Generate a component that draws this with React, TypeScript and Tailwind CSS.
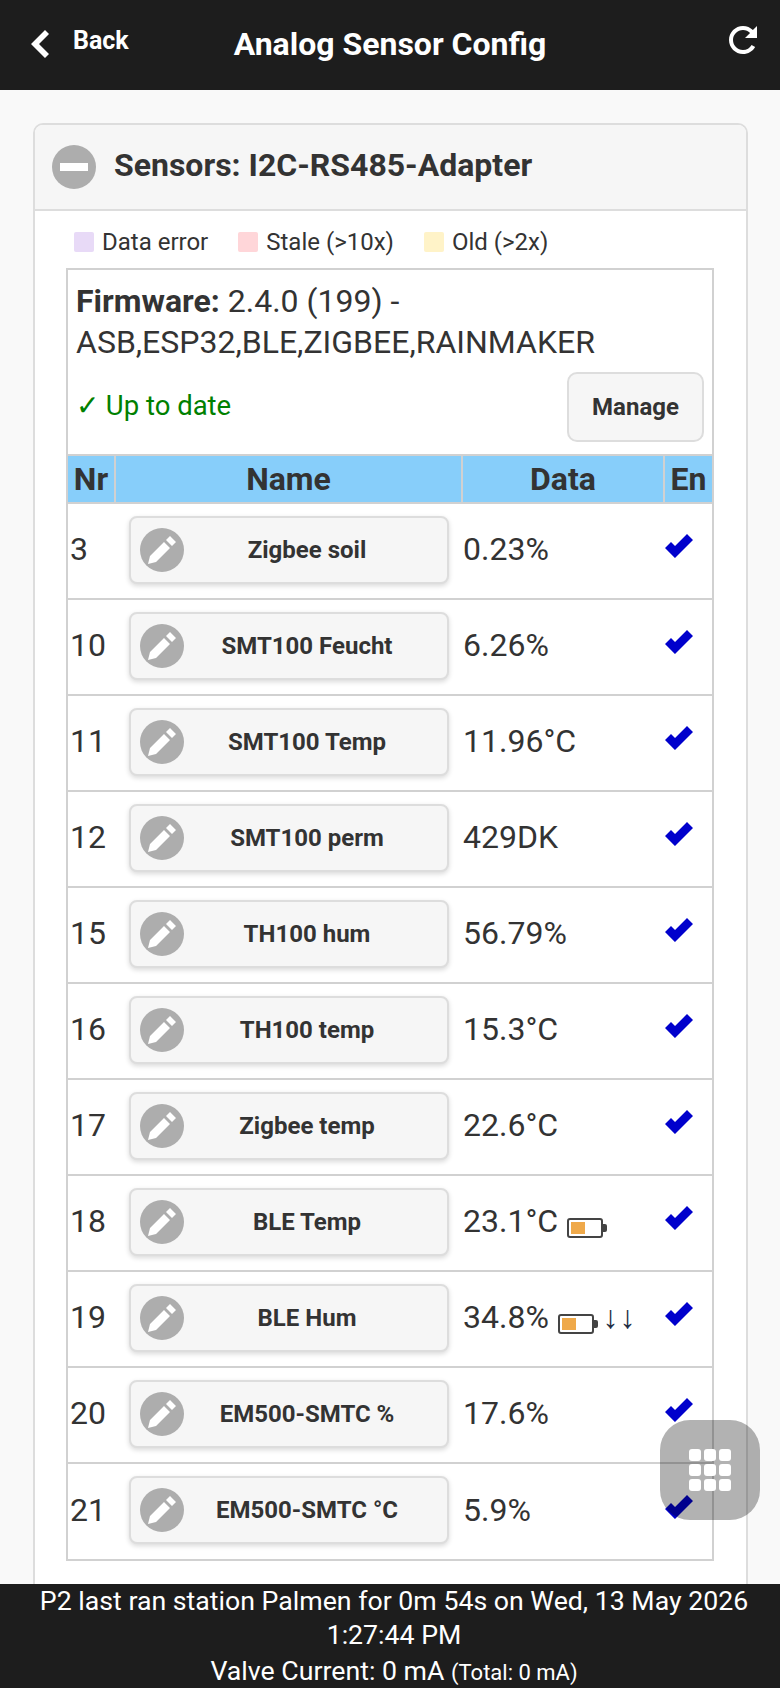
// App.tsx
const sensors = [
  { nr: 3, name: 'Zigbee soil', data: '0.23%' },
  { nr: 10, name: 'SMT100 Feucht', data: '6.26%' },
  { nr: 11, name: 'SMT100 Temp', data: '11.96°C' },
  { nr: 12, name: 'SMT100 perm', data: '429DK' },
  { nr: 15, name: 'TH100 hum', data: '56.79%' },
  { nr: 16, name: 'TH100 temp', data: '15.3°C' },
  { nr: 17, name: 'Zigbee temp', data: '22.6°C' },
  { nr: 18, name: 'BLE Temp', data: '23.1°C', battery: true },
  { nr: 19, name: 'BLE Hum', data: '34.8%', battery: true, arrows: true },
  { nr: 20, name: 'EM500-SMTC %', data: '17.6%' },
  { nr: 21, name: 'EM500-SMTC °C', data: '5.9%' },
];

const legend = [
  { label: 'Data error', color: 'bg-[#e8daf7]' },
  { label: 'Stale (>10x)', color: 'bg-[#ffd6d9]' },
  { label: 'Old (>2x)', color: 'bg-[#fff3c8]' },
];

const Battery = () => (
  <span className="ml-[9px] inline-flex items-center align-[-2px]">
    <span className="flex h-[20px] w-[36px] items-center rounded-[3px] border-2 border-[#444] pl-[2px]">
      <span className="h-[12px] w-[14px] bg-[#efa94a]" />
    </span>
    <span className="h-[8px] w-[4px] rounded-r-[2px] bg-[#444]" />
  </span>
);

const CheckIcon = () => (
  <svg viewBox="0 0 14 14" className="h-[28px] w-[28px] fill-[#0000cc]">
    <polygon points="14,4 11,1 5.003,6.997 3,5 0,8 4.966,13 4.983,12.982 5,13" />
  </svg>
);

const EditIcon = () => (
  <span className="flex h-[44px] w-[44px] items-center justify-center rounded-full bg-[#adadad]">
    <svg viewBox="0 0 14 14" className="h-[28px] w-[28px] fill-white">
      <path d="M1,10l-1,4l4-1l7-7L8,3L1,10z M11,0L9,2l3,3l2-2L11,0z" />
    </svg>
  </span>
);

export default function App() {
  return (
    <div className="relative flex h-screen flex-col overflow-hidden bg-[#f9f9f9] font-['Roboto',sans-serif] text-[#333]">
      {/* Header */}
      <header className="relative flex h-[90px] shrink-0 items-center justify-center bg-[#1d1d1d] font-bold text-white">
        <div className="absolute left-[27px] top-[28px] flex items-center">
          <svg viewBox="0 0 14 14" className="h-[28px] w-[28px] fill-white">
            <polygon points="11,12 6,7 11,2 9,0 2,7 9,14" />
          </svg>
          <span className="ml-[18px] -mt-[6px] text-[25px]">Back</span>
        </div>
        <h1 className="-mt-[2px] text-[32px]">Analog Sensor Config</h1>
        <svg viewBox="0 0 14 14" className="absolute left-[729px] top-[26px] h-[28px] w-[28px] fill-white">
          <path d="M7,12c-2.762,0-5-2.238-5-5s2.238-5,5-5c1.383,0,2.633,0.561,3.538,1.466L8,6h6V0l-2.048,2.048C10.687,0.783,8.936,0,7,0C3.134,0,0,3.134,0,7s3.134,7,7,7c2.6,0,4.87-1.42,6.08-3.53L11.3,9.45C10.44,10.98,8.84,12,7,12z" />
        </svg>
      </header>

      {/* Content */}
      <main className="min-h-0 flex-1 overflow-hidden pl-[33px] pr-[32px] pt-[33px]">
        <section className="rounded-[10px] border-2 border-[#ddd] bg-white">
          <div className="flex h-[86px] items-center gap-[18px] rounded-t-[8px] border-b-2 border-[#ddd] bg-[#f6f6f6] pl-[17px]">
            <span className="flex h-[44px] w-[44px] items-center justify-center rounded-full bg-[#adadad]">
              <svg viewBox="0 0 14 14" className="h-[28px] w-[28px] fill-white">
                <rect y="5" width="14" height="4" />
              </svg>
            </span>
            <h2 className="-mt-[4px] text-[32px] font-bold">Sensors: I2C-RS485-Adapter</h2>
          </div>

          <div className="pb-[60px] pl-[31px] pr-[32px]">
            <div className="flex h-[57px] items-center pl-[8px] pt-[5px] text-[24px]">
              {legend.map(item => (
                <div key={item.label} className="mr-[30px] flex items-center">
                  <span className={`mr-[8px] h-[20px] w-[20px] rounded-[2px] ${item.color}`} />
                  {item.label}
                </div>
              ))}
            </div>

            <div className="border-2 border-[#d1d1d1]">
              {/* Firmware */}
              <div className="relative h-[184px] pl-[8px] pt-[11px] text-[32px] leading-[41px]">
                <div><b>Firmware:</b> 2.4.0 (199) -</div>
                <div>ASB,ESP32,BLE,ZIGBEE,RAINMAKER</div>
                <div className="mt-[22px] text-[27.5px] text-[#008000]">✓ Up to date</div>
                <button className="absolute right-[8px] top-[102px] h-[70px] w-[137px] rounded-[10px] border-2 border-[#ddd] bg-[#f6f6f6] text-[24px] font-bold leading-normal">
                  Manage
                </button>
              </div>

              <table className="w-full table-fixed border-collapse">
                <colgroup>
                  <col className="w-[47px]" />
                  <col className="w-[347px]" />
                  <col className="w-[202px]" />
                  <col />
                </colgroup>
                <thead>
                  <tr className="h-[48px] border-y-2 border-[#d1d1d1] bg-[#87cefa] text-[32px] font-bold leading-[40px]">
                    <th className="border-r-2 border-[#d1d1d1]">Nr</th>
                    <th className="border-r-2 border-[#d1d1d1]">Name</th>
                    <th className="border-r-2 border-[#d1d1d1]">Data</th>
                    <th>En</th>
                  </tr>
                </thead>
                <tbody>
                  {sensors.map((s, i) => (
                    <tr key={s.nr} className={`h-[96px] text-[32px] ${i > 0 ? 'border-t-2 border-[#d1d1d1]' : ''}`}>
                      <td className="pb-[4px] pl-[2px]">{s.nr}</td>
                      <td className="pb-[3px] pl-[14px] pr-[13px]">
                        <button className="relative block h-[68px] w-[320px] rounded-[8px] border-2 border-[#ddd] bg-[#f6f6f6] pl-[55px] pr-[19px] text-[24px] font-bold shadow-[0_2px_5px_rgba(0,0,0,0.15)]">
                          <span className="absolute left-[9px] top-[10px]"><EditIcon /></span>
                          {s.name}
                        </button>
                      </td>
                      <td className="whitespace-nowrap pb-[4px] pl-[1px]">
                        {s.data}
                        {s.battery && <Battery />}
                        {s.arrows && <span className="ml-[5px] text-[32px] tracking-[1px] text-[#222c44]">↓↓</span>}
                      </td>
                      <td><div className="-mt-[10px] ml-[1px]"><CheckIcon /></div></td>
                    </tr>
                  ))}
                </tbody>
              </table>
            </div>
          </div>
        </section>
      </main>

      {/* Footer */}
      <footer className="h-[104px] shrink-0 bg-[#1d1d1d] pl-[8px] text-center text-[26.7px] leading-[34px] text-white">
        <div>P2 last ran station Palmen for 0m 54s on Wed, 13 May 2026</div>
        <div>1:27:44 PM</div>
        <div className="mt-[2px]">Valve Current: 0 mA <span className="text-[22px]">(Total: 0 mA)</span></div>
      </footer>

      {/* Floating menu button */}
      <div className="absolute left-[660px] top-[1420px] flex h-[100px] w-[100px] items-center justify-center rounded-[30px] bg-black/30">
        <div className="grid grid-cols-3 gap-[3px]">
          {Array.from({ length: 9 }).map((_, i) => (
            <span key={i} className="h-[12px] w-[12px] rounded-[3px] bg-white" />
          ))}
        </div>
      </div>
    </div>
  );
}
